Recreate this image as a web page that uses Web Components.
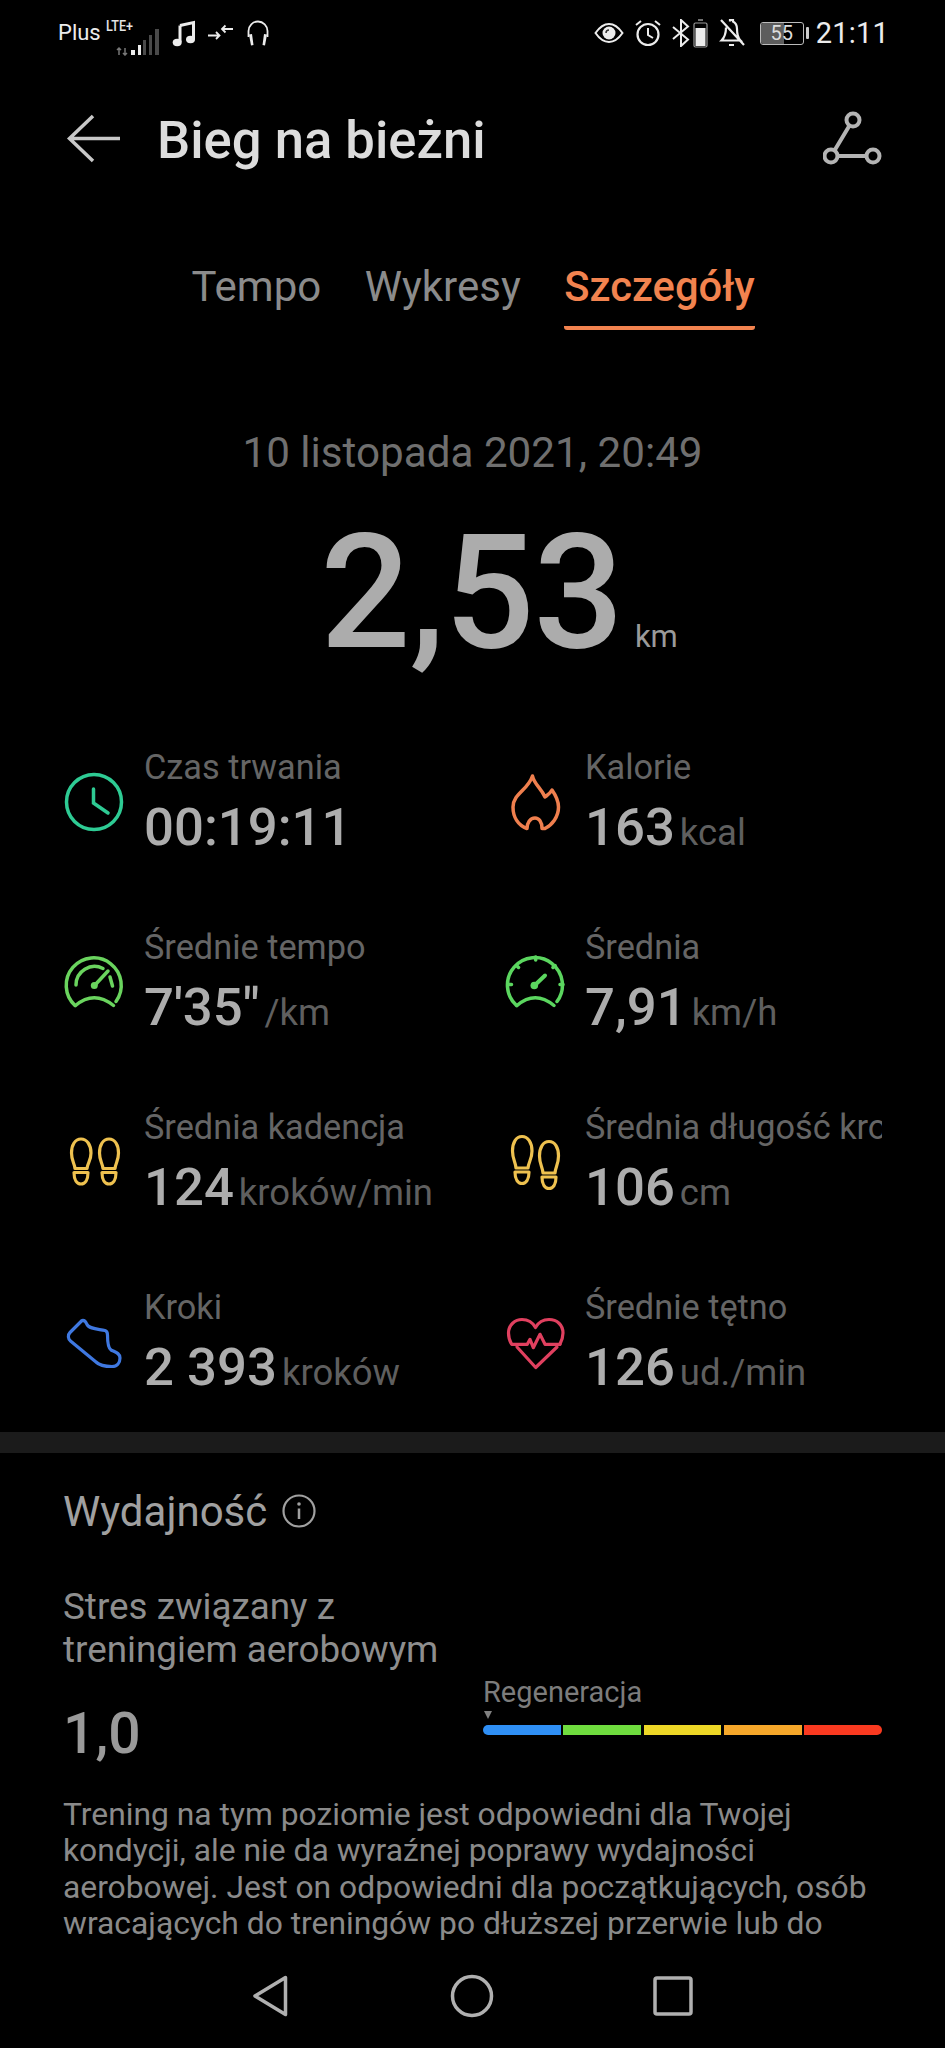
<!DOCTYPE html>
<html lang="pl"><head><meta charset="utf-8"><title>Bieg na bieżni</title>
<style>
html,body{margin:0;background:#000}
body{font-family:Roboto,"Liberation Sans",sans-serif}
</style></head><body>
<app-page>
  <status-bar></status-bar>
  <app-header title="Bieg na bieżni"></app-header>
  <tab-bar></tab-bar>
  <summary-block date="10 listopada 2021, 20:49" value="2,53" unit="km"></summary-block>
  <metric-grid>
    <metric-item icon="clock" label="Czas trwania" value="00:19:11"></metric-item>
    <metric-item icon="flame" label="Kalorie" value="163" unit="kcal"></metric-item>
    <metric-item icon="gauge1" label="Średnie tempo" value="7'35&quot;" unit="/km"></metric-item>
    <metric-item icon="gauge2" label="Średnia" value="7,91" unit="km/h"></metric-item>
    <metric-item icon="feet1" label="Średnia kadencja" value="124" unit="kroków/min"></metric-item>
    <metric-item icon="feet2" label="Średnia długość kroku" value="106" unit="cm"></metric-item>
    <metric-item icon="shoe" label="Kroki" value="2 393" unit="kroków"></metric-item>
    <metric-item icon="heart" label="Średnie tętno" value="126" unit="ud./min"></metric-item>
  </metric-grid>
  <section-divider></section-divider>
  <performance-section></performance-section>
  <nav-bar></nav-bar>
</app-page>
<script>
const def=(name,html)=>customElements.define(name,class extends HTMLElement{
  connectedCallback(){ if(this.shadowRoot)return; const s=this.attachShadow({mode:'open'}); s.innerHTML=typeof html==='function'?html(this):html; }
});
def('app-page',`<style>:host{display:flex;flex-direction:column;width:945px;height:2048px;overflow:hidden;background:#000;color:#aaa;font-family:Roboto,"Liberation Sans",sans-serif}</style><slot></slot>`);

def('status-bar',`<style>
:host{display:flex;align-items:center;justify-content:space-between;height:66px;padding:0 56px 0 58px;color:#ececec}
.g{display:flex;align-items:center}
svg{display:block;flex:none}
.plus{font-size:22px;line-height:26px}
.time{font-size:29px;line-height:32px;margin-left:7px;letter-spacing:.2px}
.bat{position:relative;width:44px;height:23px;margin-left:15px;border:1.5px solid #bbb;border-radius:3px;box-sizing:border-box;font-size:20px;line-height:20px;text-align:center;color:#ddd;overflow:hidden}
.bat i{position:absolute;left:0;top:0;bottom:0;width:55%;background:#5d5d5d}
.bat span{position:relative}
.nub{width:3px;height:12px;background:#ccc;margin-left:2px;border-radius:1px}
</style>
<div class="g">
 <span class="plus">Plus</span>
 <svg width="56" height="46" viewBox="0 0 56 46" style="margin-left:5px"><text x="0" y="21" font-family="Roboto,sans-serif" font-size="15" font-weight="500" fill="#e4e4e4" textLength="27" lengthAdjust="spacingAndGlyphs">LTE+</text>
 <path d="M13 38v7M11 40l2-2 2 2M19 45v-7M17 43l2 2 2-2" stroke="#777" stroke-width="1.5" fill="none"/>
 <g fill="#ececec"><rect x="25" y="40" width="4" height="5"/><rect x="32" y="35" width="3" height="10"/></g><g fill="#4a4a4a"><rect x="37" y="30" width="3" height="15"/><rect x="43" y="25" width="3" height="20"/><rect x="49" y="19" width="4" height="26"/></g></svg>
 <svg width="24" height="28" viewBox="0 0 24 28" style="margin-left:10px"><path d="M8 6.500L21.500 3.500V20" fill="none" stroke="#ececec" stroke-width="3"/><path d="M8 6.500V23" fill="none" stroke="#ececec" stroke-width="3"/><ellipse cx="5.200" cy="23.500" rx="4.500" ry="3.700" fill="#ececec"/><ellipse cx="18.500" cy="20.500" rx="4.500" ry="3.700" fill="#ececec"/></svg>
 <svg width="26" height="18" viewBox="0 0 26 18" style="margin-left:12px"><path d="M0 11.500H11M8 8l3.500 3.500L8 15M25 5H14M17.500 1.500L14 5l3.500 3.500" fill="none" stroke="#ececec" stroke-width="1.800"/></svg>
 <svg width="24" height="28" viewBox="0 0 24 28" style="margin-left:12px"><path d="M2.500 18V12a9.500 9.500 0 0 1 19 0v6" fill="none" stroke="#ececec" stroke-width="1.800"/><path d="M3 15.500l3-.5 1.500 11-2.500.500zM21 15.500l-3-.5-1.500 11 2.500.500z" fill="#ececec"/></svg>
</div>
<div class="g">
 <svg width="30" height="22" viewBox="0 0 30 22"><path d="M1.500 11C6 4.500 10 2 15 2s9 2.500 13.500 9C24 17.500 20 20 15 20S6 17.500 1.500 11z" fill="none" stroke="#ececec" stroke-width="2"/><circle cx="15" cy="11" r="6.500" fill="#ececec"/><path d="M12 11a3 3 0 0 1 3-3" stroke="#333" stroke-width="1.500" fill="none"/></svg>
 <svg width="28" height="28" viewBox="0 0 28 28" style="margin-left:10px"><circle cx="14" cy="15.500" r="10.500" fill="none" stroke="#ececec" stroke-width="2.200"/><path d="M14 9v7l5 3M2 6l5-4M26 6l-5-4" fill="none" stroke="#ececec" stroke-width="2"/></svg>
 <svg width="20" height="28" viewBox="0 0 20 28" style="margin-left:9px"><path d="M2 8l15 12.500L10 27V1l7 6.500L2 20" fill="none" stroke="#ececec" stroke-width="2"/></svg>
 <svg width="15" height="29" viewBox="0 0 15 29" style="margin-left:2px"><path d="M5 1h5" stroke="#999" stroke-width="1.500"/><rect x="1" y="4" width="13" height="24" rx="1.500" fill="none" stroke="#999" stroke-width="1.200"/><rect x="2.500" y="9" width="10" height="18" fill="#ececec"/></svg>
 <svg width="26" height="30" viewBox="0 0 26 30" style="margin-left:11px"><path d="M7 9.500C7 16 6 19 2.500 22.500h19c-3-3-3.500-6-3.500-11.500 0-4-2-6.500-4-7.500V2h-3v1.500M10 27h5M2 2l23 25" fill="none" stroke="#ececec" stroke-width="2.200"/></svg>
 <div class="bat"><i></i><span>55</span></div><div class="nub"></div>
 <span class="time">21:11</span>
</div>`);

def('app-header',h=>`<style>
:host{display:flex;align-items:center;height:146px;padding:0 62px 0 66px;position:relative}
h1{margin:0 0 0 35px;font-size:52.6px;line-height:60px;font-weight:500;color:#dcdcdc;flex:1;position:relative;top:1px}
svg{display:block;flex:none}
</style>
<svg width="56" height="50" viewBox="0 0 56 50"><path d="M54 24.500H4M27 2L3.500 24.500 27 47" fill="none" stroke="#c8c8c8" stroke-width="3.500"/></svg>
<h1>${h.getAttribute('title')}</h1>
<svg width="60" height="56" viewBox="0 0 60 56"><g fill="none" stroke="#b4b4b4" stroke-width="4"><circle cx="30" cy="9" r="6.500"/><circle cx="8" cy="45" r="6.500"/><circle cx="50" cy="45" r="6.500"/><path d="M26.500 14.500L11.500 39.500M14.500 45H43.500"/></g></svg>`);

def('tab-bar',`<style>
:host{display:flex;gap:43.500px;height:118px;box-sizing:border-box;padding:49px 0 0 191.500px;font-size:42px;line-height:52px;color:#8b8b8b}
.t{height:69px;box-sizing:border-box}
.a{color:#f2834f;font-weight:500;font-size:41.700px;border-bottom:4px solid #f2834f;border-radius:0 0 3px 3px}
</style><div class="t">Tempo</div><div class="t">Wykresy</div><div class="t a">Szczegóły</div>`);

def('summary-block',h=>`<style>
:host{display:block;text-align:center;height:411px;box-sizing:border-box;padding-top:97px}
.d{font-size:42.2px;line-height:52px;color:#6f6f6f}
.v{display:flex;justify-content:center;align-items:baseline;margin-top:29px;padding-left:53px}
b{font-size:159px;line-height:170px;font-weight:500;color:#acacac;letter-spacing:-1px}
span{font-size:31px;margin-left:12px;color:#9a9a9a}
</style><div class="d">${h.getAttribute('date')}</div><div class="v"><b>${h.getAttribute('value')}</b><span>${h.getAttribute('unit')}</span></div>`);

def('metric-grid',`<style>:host{display:grid;grid-template-columns:441px 379px;grid-auto-rows:180px;padding-left:62px;height:691px}</style><slot></slot>`);

const ICONS={
clock:`<g fill="none" stroke="#2ecb94" stroke-width="3.500" stroke-linecap="round"><circle cx="32" cy="32" r="27.500"/><path d="M31.500 19V33L46 43"/></g>`,
flame:`<path d="M29.500 6C31 14 38 18 42 27C44.500 25 47 23.500 49 20C52.500 25 55.500 31 55.500 37C55.500 47 49 55 42 58.500L39 58.500C39 52 36 48 32 48C27 48 24 53 24 58.500C15 55 10 47 10 37C10 24 25 20 29.500 6Z" fill="none" stroke="#ef7f4e" stroke-width="3.500" stroke-linejoin="round"/>`,
gauge1:`<g fill="none" stroke="#6ad45e" stroke-width="3.500" stroke-linecap="round"><path d="M13 55.500A27.500 27.500 0 1 1 54 51.500"/><path d="M13.500 55.500Q32 40 51.500 55.500"/><path d="M14 35A18.500 18.500 0 0 1 41 18.500"/><path d="M32.500 35.500L46 21M48 27L50.500 36"/></g><circle cx="32.300" cy="35.500" r="3.500" fill="#6ad45e"/>`,
gauge2:`<g fill="none" stroke="#5bd65f" stroke-width="3.500" stroke-linecap="round"><path d="M13.500 55.500A27.500 27.500 0 1 1 54 51.500"/><path d="M14 55.500Q32 40 51 55.500"/><path d="M32 35L42 25.500" stroke-width="4"/><path d="M32.700 7V10M13.500 15.500L15.500 17.500M52 15.500L50 17.500M5.500 34.500H8.500M57 34.500H60"/></g><circle cx="31.300" cy="35.500" r="3.800" fill="#5bd65f"/>`,
feet1:`<g fill="none" stroke="#eec14f" stroke-width="3.200" stroke-linejoin="round"><path d="M19 9C13 9 9.500 15 9.500 23C9.500 31 12.500 33 13 38.500L25 38.500C25.500 33 29 31 29 23C29 15 25 9 19 9Z"/><path d="M12 42.500H26C26 50 23 54 19 54C15 54 12 50 12 42.500Z"/><path d="M47 9C41 9 37.500 15 37.500 23C37.500 31 40.500 33 41 38.500L53 38.500C53.500 33 56.500 31 56.500 23C56.500 15 53 9 47 9Z"/><path d="M40 42.500H54C54 50 51 54 47 54C43 54 40 50 40 42.500Z"/></g>`,
feet2:`<g fill="none" stroke="#eec14f" stroke-width="3.200" stroke-linejoin="round"><path d="M19 6.500C13 6.500 9.500 12.500 9.500 21C9.500 29 12.500 32 13 38L25 38C25.500 32 29 29 29 21C29 12.500 25 6.500 19 6.500Z"/><path d="M12 42H26C26 49.500 23 53.500 19 53.500C15 53.500 12 49.500 12 42Z"/><path d="M46 11.500C40 11.500 36.500 17.500 36.500 26C36.500 34 39.500 37 40 43L52 43C52.500 37 55.500 34 55.500 26C55.500 17.500 52 11.500 46 11.500Z"/><path d="M39 47H53C53 54.500 50 58.500 46 58.500C42 58.500 39 54.500 39 47Z"/></g>`,
shoe:`<path d="M20 10.500C22 10 24 12 25 14.500C27 19 36 19 43 20.500C45 21 45.500 23 45.500 25C45.500 32 46 38 49 40C53 42 58 43 58 48C58 53 55 56.500 50 56.500C44 56.500 38 56 34 52L8.500 31C6 29 5.500 25 8 22.500Z" fill="none" stroke="#3f78e0" stroke-width="3.200" stroke-linejoin="round"/>`,
heart:`<g fill="none" stroke="#e0405f" stroke-width="3.200" stroke-linejoin="round" stroke-linecap="round"><path d="M8.500 34C6 30 5.500 26 5.500 23C5.500 15 12 9.500 19 9.500C25 9.500 30 13 32.500 17.500C35 13 40 9.500 46 9.500C54 9.500 60 15 60 23C60 27 59 30 57 34"/><path d="M9 34.300H24.300L27 29.300L30.300 37.700L37 24.300L42 34.300H57"/><path d="M14 37L32.700 57.500L54 37"/></g>`
};
def('metric-item',h=>{const u=h.getAttribute('unit');return `<style>
:host{display:flex;align-items:flex-start;min-width:0;overflow:hidden}
svg{display:block;flex:none;margin:29px 18px 0 0}
.c{min-width:0;overflow:hidden;white-space:nowrap;flex:1}
.l{font-size:34.300px;line-height:44px;color:#656565;margin-top:4px}
.r{display:flex;align-items:baseline;margin-top:7px;line-height:62px}
b{font-size:52.700px;font-weight:500;color:#adadad}
span{font-size:36.500px;color:#5f5f5f;margin-left:5px}
</style><svg width="64" height="64" viewBox="0 0 64 64">${ICONS[h.getAttribute('icon')]}</svg>
<div class="c"><div class="l">${h.getAttribute('label')}</div><div class="r"><b>${h.getAttribute('value')}</b>${u?`<span>${u}</span>`:''}</div></div>`});

def('section-divider',`<style>:host{display:block;height:21px;background:#1b1b1b}</style>`);

def('performance-section',`<style>
:host{display:block;flex:1;min-height:0;padding:0 63px;box-sizing:border-box}
.h{display:flex;align-items:center;height:116px;font-size:42px;color:#a0a0a0;gap:15px}
.h svg{display:block}
.s{font-size:36.800px;line-height:43px;color:#8e8e8e;padding-top:16px}
.row{display:flex;height:104px}
.n{width:420px;font-size:57px;font-weight:500;color:#9a9a9a;line-height:70px;padding-top:28px;box-sizing:border-box}
.p{font-size:31.800px;line-height:36.400px;color:#8a8a8a;margin:0;width:830px;padding-top:21px;white-space:nowrap}
regen-scale{flex:1}
</style>
<div class="h"><span>Wydajność</span><svg width="34" height="34" viewBox="0 0 34 34"><circle cx="17" cy="17" r="15.500" fill="none" stroke="#a0a0a0" stroke-width="2.200"/><path d="M17 14.500V25" stroke="#a0a0a0" stroke-width="2.500"/><circle cx="17" cy="10" r="1.800" fill="#a0a0a0"/></svg></div>
<div class="s">Stres związany z<br>treningiem aerobowym</div>
<div class="row"><div class="n">1,0</div><regen-scale></regen-scale></div>
<p class="p">Trening na tym poziomie jest odpowiedni dla Twojej<br>kondycji, ale nie da wyraźnej poprawy wydajności<br>aerobowej. Jest on odpowiedni dla początkujących, osób<br>wracających do treningów po dłuższej przerwie lub do</p>`);

def('regen-scale',`<style>
:host{display:block;padding-top:3px}
.l{font-size:29px;line-height:36px;color:#7c7c7c}
.t{width:0;height:0;border-left:4.500px solid transparent;border-right:4.500px solid transparent;border-top:8px solid #808080;margin:1px 0 6px 1px}
.b{display:flex;gap:2.500px;height:10px;border-radius:5px;overflow:hidden}
.b i{flex:1}
</style><div class="l">Regeneracja</div><div class="t"></div><div class="b"><i style="background:#2f8ff5"></i><i style="background:#6fdc3e"></i><i style="background:#ecd626"></i><i style="background:#f5a72a"></i><i style="background:#fa3a20"></i></div>`);

def('nav-bar',`<style>
:host{display:flex;flex:none;height:108px;box-sizing:border-box;padding:3px 2px 0 0;justify-content:center;align-items:center;gap:157px;background:#000;position:relative}
svg{display:block}
</style>
<svg width="44" height="44" viewBox="0 0 44 44"><path d="M36.500 3.500L6 22l30.500 18.500z" fill="none" stroke="#b0b0b0" stroke-width="3.500" stroke-linejoin="round"/></svg>
<svg width="44" height="44" viewBox="0 0 44 44"><circle cx="22" cy="22" r="19.500" fill="none" stroke="#b0b0b0" stroke-width="3.500"/></svg>
<svg width="44" height="44" viewBox="0 0 44 44"><rect x="4" y="4" width="36" height="36" rx="2" fill="none" stroke="#b0b0b0" stroke-width="3.500"/></svg>`);
</script>
</body></html>
